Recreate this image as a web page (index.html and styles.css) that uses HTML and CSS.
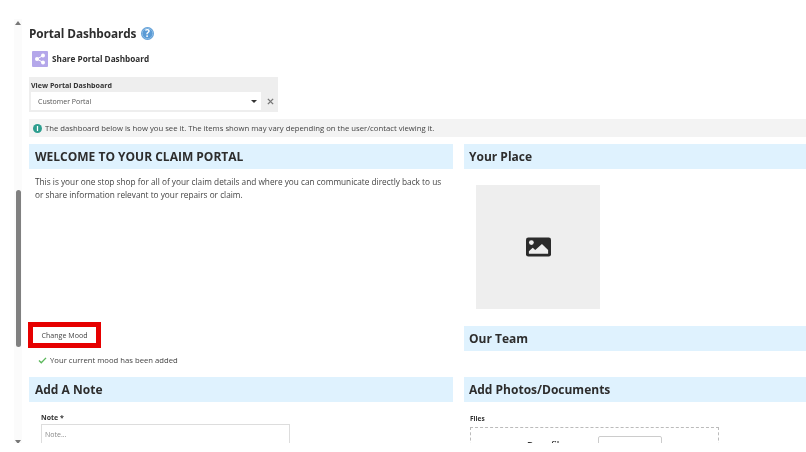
FILE: index.html
```html
<!DOCTYPE html>
<html lang="en">
<head>
<meta charset="utf-8">
<title>Portal Dashboards</title>
<link rel="stylesheet" href="styles.css">
</head>
<body>
<div class="frame">
  <div class="scrollbar">
    <span class="arrow-up"></span>
    <span class="thumb"></span>
    <span class="arrow-down"></span>
  </div>
  <main class="content">
    <div class="title-row">
      <h1 class="title">Portal Dashboards</h1>
      <svg class="help" viewBox="0 0 12 12"><circle cx="6" cy="6" r="6" fill="#5b9bd5"/><circle cx="6" cy="6" r="4.9" fill="none" stroke="#a9cdec" stroke-width="0.6"/><text x="6" y="9.2" text-anchor="middle" class="help-mark">?</text></svg>
    </div>
    <div class="share-row">
      <span class="share-icon">
        <svg viewBox="0 0 16 16" width="16" height="16"><g fill="#fff"><circle cx="11" cy="4.6" r="2"/><circle cx="11" cy="11.4" r="2"/><circle cx="5" cy="8" r="2"/></g><path d="M11 4.6 5 8l6 3.4" fill="none" stroke="#fff" stroke-width="1"/></svg>
      </span>
      <span class="share-label">Share Portal Dashboard</span>
    </div>
    <div class="view-box">
      <div class="view-label">View Portal Dashboard</div>
      <div class="view-controls">
        <div class="select"><span>Customer Portal</span><span class="caret"></span></div>
        <svg class="clear" viewBox="0 0 8 8" width="7" height="7"><path d="M1 1l6 6M7 1 1 7" stroke="#777" stroke-width="1.6"/></svg>
      </div>
    </div>
    <div class="info-bar">
      <svg class="info-icon" viewBox="0 0 10 10" width="9" height="9"><circle cx="5" cy="5" r="5" fill="#2e9e8f"/><rect x="4.3" y="2.2" width="1.4" height="5.6" fill="#fff"/></svg>
      <span>The dashboard below is how you see it. The items shown may vary depending on the user/contact viewing it.</span>
    </div>
    <div class="columns">
      <section class="col-left">
        <h2 class="band band-first">WELCOME TO YOUR CLAIM PORTAL</h2>
        <p class="intro">This is your one stop shop for all of your claim details and where you can communicate directly back to us or share information relevant to your repairs or claim.</p>
        <div class="mood-box"><span class="mood-btn">Change Mood</span></div>
        <div class="mood-msg">
          <svg viewBox="0 0 10 8" width="9" height="7"><path d="M1 4l2.6 2.6L9 1" fill="none" stroke="#5cb85c" stroke-width="1.6"/></svg>
          <span>Your current mood has been added</span>
        </div>
        <h2 class="band band-note">Add A Note</h2>
        <div class="note-label">Note *</div>
        <div class="note-input">Note...</div>
      </section>
      <section class="col-right">
        <h2 class="band band-first">Your Place</h2>
        <div class="place-photo">
          <svg viewBox="0 0 26 20" width="25" height="20"><rect width="26" height="20" rx="2.4" fill="#2b2b2b"/><circle cx="5.6" cy="5.4" r="2.5" fill="#eee"/><path d="M3 17v-2.6l4-3.6 2.6 2.4 7-6.4L23 13v4z" fill="#eee"/></svg>
        </div>
        <h2 class="band band-team">Our Team</h2>
        <h2 class="band band-photos">Add Photos/Documents</h2>
        <div class="files-label">Files</div>
        <div class="dropzone">
          <span class="drop-text">Drop files</span>
          <span class="browse"></span>
        </div>
      </section>
    </div>
  </main>
</div>
</body>
</html>
```
FILE: styles.css
```css
* { box-sizing: border-box; }
html, body { margin: 0; padding: 0; background: #fff; }
body {
  width: 806px;
  height: 452px;
  overflow: hidden;
  font-family: "Open Sans", "Noto Sans", sans-serif;
  color: #333;
}
.frame {
  display: flex;
  height: 443px;
  overflow: hidden;
  padding-top: 19px;
  filter: blur(0.35px);
}
.scrollbar {
  width: 8px;
  margin-left: 14px;
  margin-right: 7px;
  flex: none;
  display: flex;
  flex-direction: column;
  align-items: center;
  background: #fbfbfb;
  height: 425px;
  padding-top: 2px;
}
.arrow-up { width: 0; height: 0; border: 3px solid transparent; border-top: 0; border-bottom: 4px solid #777; }
.thumb { width: 5px; height: 157px; margin-top: 165px; background: #808080; border-radius: 3px; }
.arrow-down { width: 0; height: 0; margin-top: auto; border: 3px solid transparent; border-bottom: 0; border-top: 4px solid #777; }
.content { flex: 1; min-width: 0; }
.title-row { display: flex; align-items: center; gap: 5px; height: 28px; }
.title { margin: 0; font-size: 11.8px; font-weight: 700; color: #2d2d2d; line-height: 28px; letter-spacing: -0.1px; }
.help { width: 13px; height: 13px; }
.help-mark { font-size: 9.5px; font-weight: 700; fill: #fff; font-family: "Open Sans", sans-serif; }
.share-row { display: flex; align-items: center; gap: 4px; margin-left: 3px; margin-top: 3px; height: 17px; }
.share-icon { width: 16px; height: 16px; background: #b4a7ea; border-radius: 1px; display: block; }
.share-icon svg { display: block; }
.share-label { font-size: 8.2px; font-weight: 700; color: #2d2d2d; }
.view-box { width: 249px; height: 35px; margin-top: 10px; background: #eeeeee; padding: 3px 0 0 2px; }
.view-label { font-size: 7.1px; font-weight: 700; line-height: 11px; color: #333; }
.view-controls { display: flex; align-items: center; margin-top: 1px; }
.select { width: 230px; height: 18px; background: #fff; display: flex; align-items: center; justify-content: space-between; padding: 0 4px 0 7px; font-size: 7px; color: #555; }
.caret { width: 0; height: 0; border: 3px solid transparent; border-bottom: 0; border-top: 3.5px solid #333; }
.clear { margin-left: 6px; }
.info-bar { height: 18px; margin-top: 7px; background: #f3f3f3; display: flex; align-items: center; gap: 3px; padding-left: 4px; font-size: 7.72px; color: #444; }
.columns { display: grid; grid-template-columns: 424px 342px; column-gap: 11px; margin-top: 7px; }
.band { margin: 0; height: 25px; padding-left: 6px; background: #dff2fe; font-size: 12px; font-weight: 700; line-height: 25px; color: #2d2d2d; }
.col-left { min-width: 0; }
.col-right .band { padding-left: 5px; }
.intro { margin: 6px 0 0 6px; width: 412px; font-size: 8.28px; line-height: 13px; color: #444; }
.mood-box { width: 73px; height: 26px; margin: 121px 0 0 -1px; border: 5px solid #e60000; background: #fff; display: flex; align-items: center; justify-content: center; }
.mood-btn { font-size: 7.1px; color: #444; white-space: nowrap; }
.mood-msg { display: flex; align-items: center; gap: 3px; margin: 6px 0 0 9px; height: 12px; font-size: 7.7px; color: #444; }
.band-note { margin-top: 11px; }
.note-label { margin: 10px 0 0 12px; font-size: 7px; font-weight: 700; line-height: 11px; }
.note-input { width: 249px; height: 30px; margin: 1px 0 0 12px; border: 1px solid #ddd; padding: 5px 3px; font-size: 7px; color: #888; }
.place-photo { width: 124px; height: 124px; margin: 16px 0 0 12px; background: #eeeeee; display: flex; align-items: center; justify-content: center; }
.band-team { margin-top: 17px; }
.band-photos { margin-top: 26px; }
.files-label { margin: 12px 0 0 6px; font-size: 6.5px; font-weight: 700; line-height: 10px; }
.dropzone { position: relative; width: 249px; height: 40px; margin: 3px 0 0 6px; border: 1px dashed #bbb; }
.drop-text { position: absolute; left: 56px; top: 10px; font-size: 9px; font-weight: 600; color: #333; white-space: nowrap; }
.browse { position: absolute; left: 127px; top: 8px; width: 64px; height: 24px; border: 1px solid #ccc; border-radius: 2px; }
```
